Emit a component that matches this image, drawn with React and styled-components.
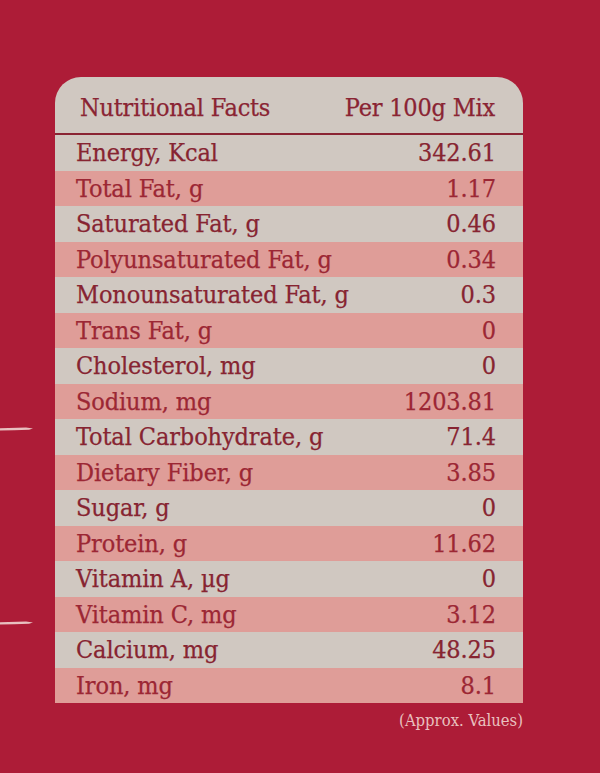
import React from "react";
import styled, { createGlobalStyle } from "styled-components";

const GlobalStyle = createGlobalStyle`
  html, body {
    margin: 0;
    padding: 0;
    background: #ad1c37;
  }
`;

const Page = styled.div`
  position: relative;
  width: 600px;
  height: 773px;
  background: #ad1c37;
  font-family: "DejaVu Serif Condensed", "DejaVu Serif", serif;
  font-stretch: condensed;
  padding: 77px 0 0 55px;
  box-sizing: border-box;
  overflow: hidden;
`;

const Table = styled.div`
  width: 468px;
  display: flex;
  flex-direction: column;
`;

const Header = styled.div`
  box-sizing: border-box;
  height: 58px;
  background: #d0c8c1;
  border-radius: 26px 26px 0 0;
  border-bottom: 2px solid #8a2433;
  display: flex;
  justify-content: space-between;
  align-items: center;
  padding: 4px 28px 0 25px;
  font-size: 25px;
  letter-spacing: -0.2px;
  color: #8a2433;
  -webkit-text-stroke: 0.25px currentColor;
`;

const Row = styled.div`
  height: 35.5px;
  line-height: 35.5px;
  display: flex;
  justify-content: space-between;
  padding: 0 27px 0 21px;
  font-size: 25px;
  letter-spacing: -0.1px;
  -webkit-text-stroke: 0.25px currentColor;
  background: ${(p) => (p.$pink ? "#df9d98" : "#d0c8c1")};
  color: ${(p) => (p.$pink ? "#9c2734" : "#872431")};
`;

const Note = styled.div`
  width: 468px;
  text-align: right;
  font-size: 16.5px;
  color: #e9c0bf;
  margin-top: 8px;
`;

const Scratch = styled.svg`
  position: absolute;
  left: 0;
  top: ${(p) => p.$top}px;
`;

const rows = [
  ["Energy, Kcal", "342.61"],
  ["Total Fat, g", "1.17"],
  ["Saturated Fat, g", "0.46"],
  ["Polyunsaturated Fat, g", "0.34"],
  ["Monounsaturated Fat, g", "0.3"],
  ["Trans Fat, g", "0"],
  ["Cholesterol, mg", "0"],
  ["Sodium, mg", "1203.81"],
  ["Total Carbohydrate, g", "71.4"],
  ["Dietary Fiber, g", "3.85"],
  ["Sugar, g", "0"],
  ["Protein, g", "11.62"],
  ["Vitamin A, µg", "0"],
  ["Vitamin C, mg", "3.12"],
  ["Calcium, mg", "48.25"],
  ["Iron, mg", "8.1"],
];

function Mark({ top }) {
  return (
    <Scratch $top={top} width="36" height="8" viewBox="0 0 36 8">
      <path d="M0 3.2 L26 2.6 L33 3.4 L29 4.8 L14 5.2 L0 5.4 Z" fill="#eed3cf" opacity="0.9" />
    </Scratch>
  );
}

export default function App() {
  return (
    <Page>
      <GlobalStyle />
      <Mark top={425} />
      <Mark top={619} />
      <Table>
        <Header>
          <span>Nutritional Facts</span>
          <span>Per 100g Mix</span>
        </Header>
        {rows.map(([name, value], i) => (
          <Row key={name} $pink={i % 2 === 1}>
            <span>{name}</span>
            <span>{value}</span>
          </Row>
        ))}
      </Table>
      <Note>(Approx. Values)</Note>
    </Page>
  );
}
